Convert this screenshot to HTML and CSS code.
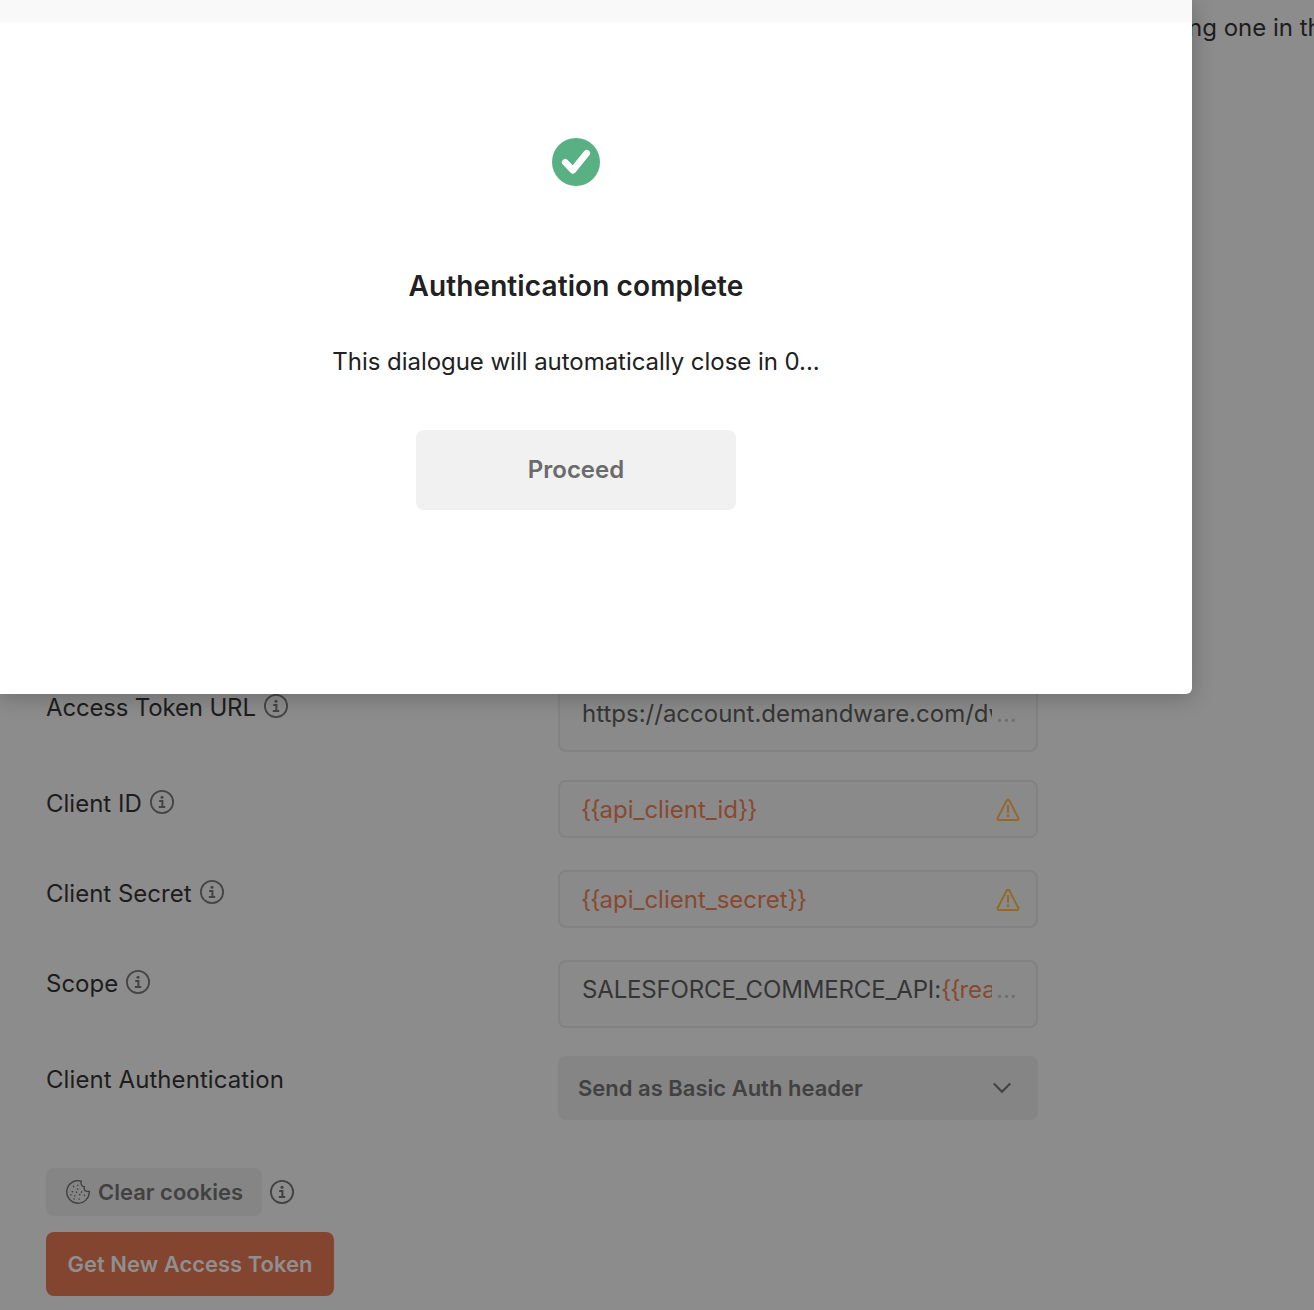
FILE: index.html
```html
<!DOCTYPE html>
<html lang="en">
<head>
<meta charset="utf-8">
<title>Authentication complete</title>
<link rel="stylesheet" href="styles.css">
</head>
<body>
<svg class="symbols" aria-hidden="true">
  <symbol id="info" viewBox="0 0 24 24">
    <circle cx="12" cy="12" r="11.1" fill="none" stroke="currentColor" stroke-width="1.8"/>
    <circle cx="12" cy="7.2" r="1.5" fill="currentColor"/>
    <path d="M9.2 11H12.4V17M8.8 17H15.2" fill="none" stroke="currentColor" stroke-width="2"/>
  </symbol>
  <symbol id="warning" viewBox="0 0 24 24">
    <path d="M10.6 2.7Q12 .9 13.4 2.7L22.5 20.3Q22.8 22 21.2 22H2.8Q1.2 22 1.5 20.3Z" fill="none" stroke="currentColor" stroke-width="1.9" stroke-linejoin="round"/>
    <path d="M12 7V14.8" fill="none" stroke="currentColor" stroke-width="2.1"/>
    <circle cx="12" cy="17.8" r="1.4" fill="currentColor"/>
  </symbol>
</svg>
<main class="page">
  <p class="hint">ng one in th</p>
  <div class="form">
    <div class="row row-tall">
      <div class="label label-url">Access Token URL <svg class="icon"><use href="#info"/></svg></div>
      <div class="field field-tall"><span class="value value-url">https://account.demandware.com/dw</span><span class="more">...</span></div>
    </div>
    <div class="row">
      <div class="label">Client ID <svg class="icon"><use href="#info"/></svg></div>
      <div class="field"><span class="value variable"><span class="brace">{{</span>api_client_id<span class="brace">}}</span></span><svg class="icon warning"><use href="#warning"/></svg></div>
    </div>
    <div class="row">
      <div class="label">Client Secret <svg class="icon"><use href="#info"/></svg></div>
      <div class="field"><span class="value variable"><span class="brace">{{</span>api_client_secret<span class="brace">}}</span></span><svg class="icon warning"><use href="#warning"/></svg></div>
    </div>
    <div class="row row-tall">
      <div class="label">Scope <svg class="icon"><use href="#info"/></svg></div>
      <div class="field field-tall"><span class="value value-scope">SALESFORCE_COMMERCE_API:<span class="variable"><span class="brace">{{</span>rea</span></span><span class="more">...</span></div>
    </div>
    <div class="row row-select">
      <div class="label label-auth">Client Authentication</div>
      <div class="select"><span>Send as Basic Auth header</span>
        <svg class="chevron" viewBox="0 0 20 12"><path d="M1.8 1.5L10 9.8L18.2 1.5" fill="none" stroke="currentColor" stroke-width="2"/></svg>
      </div>
    </div>
    <div class="cookies">
      <button class="clear">
        <svg class="icon" viewBox="0 0 24 24" fill="none" stroke="currentColor">
          <path d="M15.2 1.1A11.3 11.3 0 1 0 23.3 11.2Q19 12 18.3 9.5Q18 8.3 18.4 6.8Q16.2 6.8 15.4 4.8Q14.8 3 15.2 1.1Z" stroke-width="1.4" stroke-linejoin="round"/>
          <path d="M7 6.8l1.3-.6M11.3 5l1 .7M11.2 9.4l1.1-.7M5.7 11.3l1.2.7M15 11.6l1 .7M9.8 12.5l1.2-.6M13.2 15l1.2-.6M18 15.6l1-.6M4.2 15.2l1.2-.6M8.3 15.5l1 .6M7.5 19.2l1.1-.6M12.5 18.8l1.1.6" stroke-width="1.5"/>
        </svg>
        <span>Clear cookies</span>
      </button>
      <svg class="icon info-dark"><use href="#info"/></svg>
    </div>
    <button class="token">Get New Access Token</button>
  </div>
</main>
<section class="dialog">
  <div class="dialog-head"></div>
  <div class="dialog-body">
    <svg class="check" viewBox="0 0 48 48"><circle cx="24" cy="24" r="24" fill="#58b083"/><path d="M13.2 24.3L20.8 32.3L34.8 15.2" fill="none" stroke="#fff" stroke-width="6.6" stroke-linecap="round" stroke-linejoin="round"/></svg>
    <h1 class="title">Authentication complete</h1>
    <p class="message">This dialogue will automatically close in 0...</p>
    <button class="proceed">Proceed</button>
  </div>
</section>
</body>
</html>
```
FILE: styles.css
```css
* { box-sizing: border-box; }
body { margin: 0; background: #8c8c8c; color: #1d1d1d; font-family: Inter, sans-serif; font-size: 24px; overflow: hidden; }
button { border: 0; padding: 0; font: inherit; }
.symbols { display: none; }
.page { height: 1310px; overflow: hidden; }
.hint { margin: 0; height: 684px; padding: 8px 0 0 1188px; line-height: 40px; white-space: nowrap; overflow: hidden; }
.form { padding-left: 46px; }
.row { display: grid; grid-template-columns: 512px 480px; height: 90px; align-items: start; }
.row-tall { height: 96px; }
.row-select { height: 112px; }
.label { display: flex; align-items: flex-start; gap: 8px; line-height: 47px; }
.label-url { letter-spacing: -.17px; }
.label-auth { letter-spacing: .08px; }
.icon { width: 24px; height: 24px; flex: none; }
.label .icon { margin-top: 10px; color: #444; }
.field { display: flex; height: 58px; border: 2px solid #828282; border-radius: 8px; background: #8a8a8a; padding: 0 16px 0 22px; line-height: 56px; color: #353535; }
.field-tall { height: 68px; }
.value { flex: none; width: 410px; height: 56px; overflow: hidden; white-space: nowrap; }
.value-scope { letter-spacing: -.15px; }
.variable { color: #874930; letter-spacing: 0; }
.brace { letter-spacing: -1px; }
.value.variable { text-indent: -1px; }
.more { color: #707070; padding-left: 4px; }
.warning { margin: 16px 0 0 4px; color: #92692a; }
.select { display: flex; align-items: center; justify-content: space-between; height: 64px; border-radius: 8px; background: #858585; color: #414141; padding: 0 26px 0 20px; font-size: 22px; font-weight: 600; }
.chevron { width: 20px; height: 12px; }
.cookies { display: flex; align-items: center; gap: 8px; height: 48px; margin-bottom: 16px; color: #414141; }
.clear { display: flex; align-items: center; gap: 8px; width: 216px; height: 48px; padding-left: 20px; border-radius: 8px; background: #858585; color: #414141; font-size: 22px; font-weight: 600; white-space: nowrap; }
.token { display: block; width: 288px; height: 64px; border-radius: 8px; background: #834530; color: #8f8f8f; font-size: 22px; font-weight: 600; }
.dialog { position: absolute; top: 0; left: 0; width: 1192px; height: 694px; background: #fff; border-bottom-right-radius: 6px; box-shadow: 0 3px 22px rgba(0, 0, 0, .24); }
.dialog-head { height: 22px; background: #f9f9f9; }
.dialog-body { display: flex; flex-direction: column; align-items: center; width: 1152px; padding-top: 116px; color: #212121; }
.check { width: 48px; height: 48px; }
.title { margin: 80px 0 0; font-size: 28px; font-weight: 600; line-height: 40px; letter-spacing: .1px; }
.message { margin: 36px 0 0; line-height: 40px; letter-spacing: -.04px; }
.proceed { width: 320px; height: 80px; margin-top: 48px; padding-bottom: 2px; border-radius: 8px; background: #f1f1f1; color: #6b6b6b; font-weight: 600; }
```
